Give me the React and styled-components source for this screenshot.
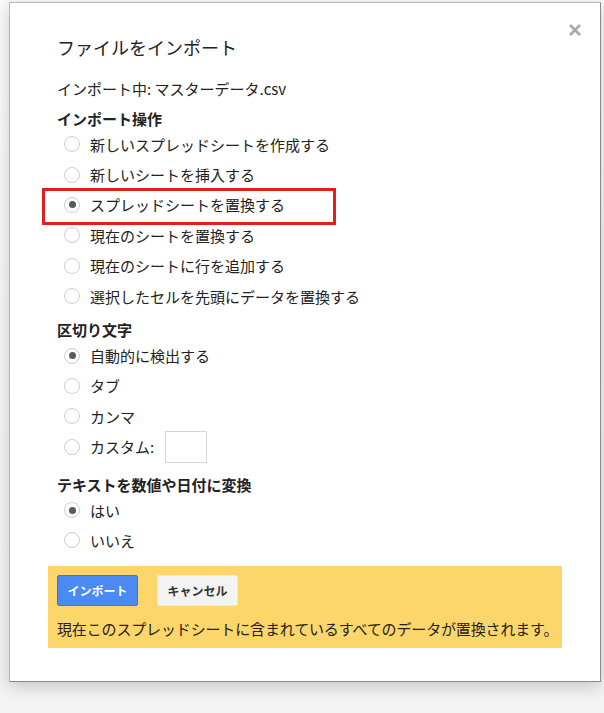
import React from "react"
import styled, { createGlobalStyle } from "styled-components"

const GlobalStyle = createGlobalStyle`
  html, body {
    margin: 0;
    padding: 0;
    background: #f7f7f7;
  }
  body {
    font-family: "Noto Sans CJK JP", "Noto Sans", sans-serif;
    color: #222;
  }
`

const Page = styled.div`
  width: 604px;
  height: 713px;
  padding: 2px 3px 0 9px;
  box-sizing: border-box;
  background: linear-gradient(#fbfbfb, #f3f3f3);
`

const Dialog = styled.div`
  position: relative;
  width: 592px;
  box-sizing: border-box;
  background: #fff;
  border: 1px solid #b8b8b8;
  border-right-color: #8a8a8a;
  border-bottom-color: #8a8a8a;
  box-shadow: 0 4px 16px rgba(0, 0, 0, 0.2);
  padding: 32px 38px 33px;
`

const Close = styled.button`
  position: absolute;
  top: 19px;
  right: 17px;
  width: 16px;
  height: 16px;
  padding: 0;
  border: none;
  background: none;
  cursor: pointer;
`

const Body = styled.div`
  padding-left: 9px;
`

const Title = styled.h2`
  margin: 0;
  font-size: 18px;
  font-weight: 400;
  line-height: 24px;
  color: #222;
`

const FileLine = styled.div`
  margin-top: 20px;
  font-size: 15px;
  line-height: 20px;
`

const Heading = styled.div`
  margin-top: ${(p) => p.$gap || 10}px;
  font-size: 15px;
  font-weight: 700;
  line-height: 20px;
`

const Option = styled.label`
  position: relative;
  display: flex;
  align-items: center;
  height: 30.4px;
  padding-left: 7px;
  font-size: 15px;
  color: #222;

  ${(p) =>
    p.$marked &&
    `
    &::after {
      content: "";
      position: absolute;
      left: -15px;
      top: -2px;
      width: 294px;
      height: 37px;
      border: 3px solid #e0201e;
      box-sizing: border-box;
      pointer-events: none;
    }
  `}
`

const Circle = styled.span`
  display: inline-flex;
  align-items: center;
  justify-content: center;
  width: 16px;
  height: 16px;
  margin-right: 10px;
  border-radius: 50%;
  border: 1px solid #cdcdcd;
  box-sizing: border-box;
  background: #fff;

  &::before {
    content: "";
    width: 7px;
    height: 7px;
    border-radius: 50%;
    background: ${(p) => (p.$on ? "#5a5a5a" : "transparent")};
  }
`

const CustomInput = styled.span`
  display: inline-block;
  width: 42px;
  height: 32px;
  margin-left: 11px;
  border: 1px solid #d4d4d4;
  box-sizing: border-box;
`

const Notice = styled.div`
  margin: 10px 0 0;
  background: #fdd66b;
  padding: 9px 9px 9px;
`

const Buttons = styled.div`
  display: flex;
  gap: 19px;
`

const Button = styled.button`
  width: 81px;
  height: 31px;
  border-radius: 2px;
  font-family: inherit;
  font-size: 12px;
  font-weight: 700;
  cursor: pointer;
  border: 1px solid ${(p) => (p.$primary ? "#3079ed" : "#e8e8e8")};
  background: ${(p) => (p.$primary ? "#4a8af4" : "#f3f3f3")};
  color: ${(p) => (p.$primary ? "#fff" : "#333")};
`

const NoticeText = styled.div`
  margin-top: 13px;
  font-size: 15px;
  line-height: 20px;
  letter-spacing: -0.15px;
  white-space: nowrap;
  color: #222;
`

const Radio = ({ on, marked, children }) => (
  <Option $marked={marked}>
    <Circle $on={on} />
    {children}
  </Option>
)

export default function App() {
  return (
    <>
      <GlobalStyle />
      <Page>
        <Dialog>
          <Close aria-label="閉じる">
            <svg width="16" height="16" viewBox="0 0 16 16">
              <path d="M3 3 L13 13 M13 3 L3 13" stroke="#a8a8a8" strokeWidth="2.6" />
            </svg>
          </Close>
          <Body>
            <Title>ファイルをインポート</Title>
            <FileLine>インポート中: マスターデータ.csv</FileLine>

            <Heading>インポート操作</Heading>
            <Radio>新しいスプレッドシートを作成する</Radio>
            <Radio>新しいシートを挿入する</Radio>
            <Radio on marked>スプレッドシートを置換する</Radio>
            <Radio>現在のシートを置換する</Radio>
            <Radio>現在のシートに行を追加する</Radio>
            <Radio>選択したセルを先頭にデータを置換する</Radio>

            <Heading $gap={9}>区切り文字</Heading>
            <Radio on>自動的に検出する</Radio>
            <Radio>タブ</Radio>
            <Radio>カンマ</Radio>
            <Radio>
              カスタム:
              <CustomInput />
            </Radio>

            <Heading $gap={13}>テキストを数値や日付に変換</Heading>
            <Radio on>はい</Radio>
            <Radio>いいえ</Radio>
          </Body>

          <Notice>
            <Buttons>
              <Button $primary>インポート</Button>
              <Button>キャンセル</Button>
            </Buttons>
            <NoticeText>
              現在このスプレッドシートに含まれているすべてのデータが置換されます。
            </NoticeText>
          </Notice>
        </Dialog>
      </Page>
    </>
  )
}
